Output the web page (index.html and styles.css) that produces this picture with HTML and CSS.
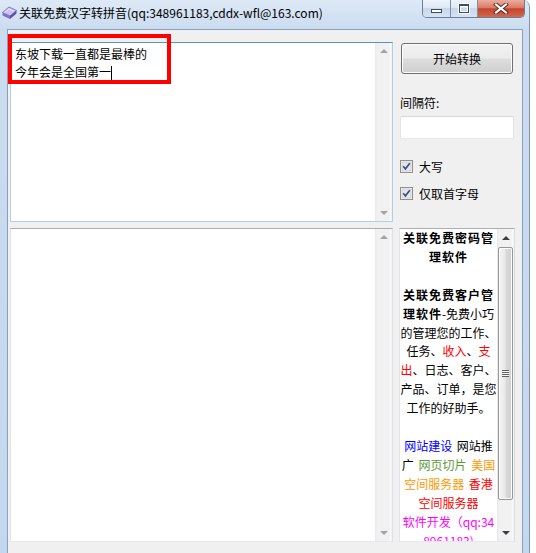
FILE: index.html
```html
<!DOCTYPE html>
<html lang="zh">
<head>
<meta charset="utf-8">
<title>关联免费汉字转拼音</title>
<link rel="stylesheet" href="styles.css">
</head>
<body>
<div class="window">
  <div class="titlebar">
    <svg class="app-icon" width="15" height="15" viewBox="0 0 15 15">
      <polygon points="0.5,7.5 7,2 14.5,5.5 8,11" fill="#c9c2f2" stroke="#6d62b8" stroke-width="0.8"/>
      <polygon points="0.5,7.5 8,11 8,14 0.5,10.5" fill="#7e73c8"/>
      <polygon points="8,11 14.5,5.5 14.5,8.5 8,14" fill="#5a4fa6"/>
      <polyline points="2.5,7.6 7,4 12,6.2" fill="none" stroke="#ffffff" stroke-width="0.8" opacity="0.8"/>
    </svg>
    <span class="title">关联免费汉字转拼音(qq:348961183,cddx-wfl@163.com)</span>
    <div class="caption">
      <div class="cbtn cbtn-min"><span class="min-glyph"></span></div>
      <div class="cbtn cbtn-max"><span class="max-glyph"></span></div>
      <div class="cbtn cbtn-close">
        <svg width="16" height="11" viewBox="0 0 16 11">
          <path d="M3,1.5 L13,9.5 M13,1.5 L3,9.5" stroke="#4a2a24" stroke-width="4" stroke-linecap="square"/>
          <path d="M3,1.5 L13,9.5 M13,1.5 L3,9.5" stroke="#ffffff" stroke-width="2.2" stroke-linecap="square"/>
        </svg>
      </div>
    </div>
  </div>

  <div class="client">
    <div class="memo memo-focus">
      <div class="memo-text">东坡下载一直都是最棒的<br>今年会是全国第一<span class="caret"></span></div>
      <div class="vscroll">
        <span class="arrow arrow-up"></span>
        <span class="arrow arrow-down"></span>
      </div>
    </div>

    <div class="controls">
      <div class="btn">开始转换</div>
      <div class="field-label">间隔符:</div>
      <div class="textbox"></div>
      <div class="check-row check-first">
        <svg class="checkbox" width="13" height="13" viewBox="0 0 13 13">
          <rect x="0.5" y="0.5" width="12" height="12" fill="#f4f4f4" stroke="#8e8f8f"/>
          <rect x="2" y="2" width="9" height="9" fill="#e6e6e6" stroke="#c2c4c6" stroke-width="0.6"/>
          <path d="M3.2,6.3 L5.4,8.8 L9.8,3.2" fill="none" stroke="#3c4f8c" stroke-width="1.7"/>
        </svg>
        <span>大写</span>
      </div>
      <div class="check-row check-second">
        <svg class="checkbox" width="13" height="13" viewBox="0 0 13 13">
          <rect x="0.5" y="0.5" width="12" height="12" fill="#f4f4f4" stroke="#8e8f8f"/>
          <rect x="2" y="2" width="9" height="9" fill="#e6e6e6" stroke="#c2c4c6" stroke-width="0.6"/>
          <path d="M3.2,6.3 L5.4,8.8 L9.8,3.2" fill="none" stroke="#3c4f8c" stroke-width="1.7"/>
        </svg>
        <span>仅取首字母</span>
      </div>
    </div>

    <div class="memo memo-plain">
      <div class="memo-text"></div>
      <div class="vscroll">
        <span class="arrow arrow-up"></span>
        <span class="arrow arrow-down"></span>
      </div>
    </div>

    <div class="richbox">
      <div class="rich-text">
        <div class="line"><b>关联免费密码管</b></div>
        <div class="line"><b>理软件</b></div>
        <div class="line">&nbsp;</div>
        <div class="line"><b>关联免费客户管</b></div>
        <div class="line"><b>理软件</b>-免费小巧</div>
        <div class="line">的管理您的工作、</div>
        <div class="line">任务、<span class="c-red">收入</span>、<span class="c-red">支</span></div>
        <div class="line"><span class="c-red">出</span>、日志、客户、</div>
        <div class="line">产品、订单，是您</div>
        <div class="line">工作的好助手。</div>
        <div class="line">&nbsp;</div>
        <div class="line"><span class="c-blue">网站建设</span> 网站推</div>
        <div class="line">广 <span class="c-green">网页切片</span> <span class="c-orange">美国</span></div>
        <div class="line"><span class="c-orange">空间服务器</span> <span class="c-red">香港</span></div>
        <div class="line"><span class="c-red">空间服务器</span></div>
        <div class="line c-magenta">软件开发（qq:34</div>
        <div class="line c-magenta">8961183)</div>
      </div>
      <div class="vscroll vscroll-active">
        <span class="sbtn"><span class="arrow arrow-up"></span></span>
        <span class="thumb"><span class="grip"></span></span>
        <span class="track"></span>
        <span class="sbtn"><span class="arrow arrow-down"></span></span>
      </div>
    </div>
  </div>

  <div class="annotation"></div>
</div>
</body>
</html>
```

FILE: styles.css
```css
* { box-sizing: border-box; }

html, body {
  margin: 0;
  padding: 0;
}

body {
  width: 536px;
  height: 553px;
  overflow: hidden;
  background: #ffffff;
  font-family: "Noto Sans CJK SC", "Noto Sans", sans-serif;
  font-size: 12px;
  color: #000;
}

.window {
  position: relative;
  width: 530px;
  height: 553px;
  padding: 0 6px 0 7px;
  background: linear-gradient(180deg, #dde9f6 0px, #cbdcf0 29px, #c3d7ee 100%);
  border-right: 1px solid #8196b0;
  border-top-right-radius: 7px;
}

/* ---------- title bar ---------- */
.titlebar {
  height: 29px;
  margin: 0 -6px 0 -7px;
  display: flex;
  align-items: flex-start;
}

.app-icon {
  margin: 5px 2px 0 2px;
  flex: none;
}

.title {
  margin-top: 5px;
  line-height: 16px;
  font-size: 12px;
  white-space: nowrap;
  color: #000;
}

.caption {
  margin-left: auto;
  margin-right: 4px;
  display: flex;
  height: 18px;
  border: 1px solid #6b7e96;
  border-top: none;
  border-radius: 0 0 5px 5px;
  overflow: hidden;
}

.cbtn {
  display: flex;
  align-items: center;
  justify-content: center;
  height: 100%;
}

.cbtn-min,
.cbtn-max {
  width: 27px;
  background: linear-gradient(180deg, #edf3fa 0%, #dfe8f4 45%, #c8d7ea 50%, #d6e3f2 100%);
}

.cbtn-max,
.cbtn-close {
  border-left: 1px solid #7d8fa6;
}

.cbtn-close {
  width: 47px;
  background: linear-gradient(180deg, #eaada0 0%, #da7c66 45%, #c5432d 52%, #d2684f 100%);
}

.min-glyph {
  display: block;
  width: 11px;
  height: 4px;
  margin-top: 5px;
  background: #ffffff;
  border: 1px solid #3c4d63;
}

.max-glyph {
  display: block;
  width: 10px;
  height: 9px;
  border: 1px solid #3c4d63;
  border-top-width: 2px;
  background: transparent;
  box-shadow: 0 0 0 1px rgba(255, 255, 255, 0.85), inset 0 0 0 1px rgba(255, 255, 255, 0.85);
}

/* ---------- client ---------- */
.client {
  height: 524px;
  background: #f0f0f0;
  border: 1px solid #8aa0bc;
  border-bottom: none;
  padding: 12px 0 0 2px;
  display: grid;
  grid-template-columns: 383px 116px;
  grid-template-rows: 180px 314px;
  column-gap: 6px;
  row-gap: 6px;
  align-content: start;
}

.memo {
  display: flex;
  background: #ffffff;
  border: 1px solid;
  overflow: hidden;
}

.memo-focus {
  border-color: #5c93bd #b4cde6 #b4cde6 #b4cde6;
}

.memo-plain {
  border-color: #abadb3 #dbdfe6 #e3e9ef #e2e3ea;
}

.memo-text {
  flex: 1;
  padding: 2px 4px;
  line-height: 18px;
  white-space: nowrap;
}

.caret {
  display: inline-block;
  width: 1px;
  height: 14px;
  background: #000;
  vertical-align: -3px;
}

/* ---------- scrollbars ---------- */
.vscroll {
  width: 17px;
  flex: none;
  display: flex;
  flex-direction: column;
  justify-content: space-between;
  align-items: center;
  padding: 6px 0;
  background: linear-gradient(90deg, #e7e7e7 0px, #f1f1f1 2px, #f1f1f1 14px, #fbfbfb 16px, #eaeaea 17px);
}

.arrow {
  display: block;
  width: 0;
  height: 0;
  border-left: 4px solid transparent;
  border-right: 4px solid transparent;
}

.arrow-up {
  border-bottom: 4px solid #a3a3a3;
}

.arrow-down {
  border-top: 4px solid #a3a3a3;
}

.vscroll-active {
  padding: 0;
  justify-content: flex-start;
  align-items: stretch;
}

.vscroll-active .arrow-up { border-bottom-color: #3d3d3d; }
.vscroll-active .arrow-down { border-top-color: #3d3d3d; }

.sbtn {
  height: 17px;
  flex: none;
  display: flex;
  align-items: center;
  justify-content: center;
}

.thumb {
  height: 253px;
  margin: 1px 1px 0 1px;
  flex: none;
  border: 1px solid #979797;
  border-radius: 2px;
  background: linear-gradient(90deg, #f4f4f4 0%, #e9e9e9 45%, #d9d9d9 55%, #d0d0d0 100%);
  box-shadow: inset 0 0 0 1px #fbfbfb;
  display: flex;
  align-items: center;
  justify-content: center;
}

.grip {
  display: block;
  width: 7px;
  height: 7px;
  background: repeating-linear-gradient(180deg, #5f5f5f 0px, #5f5f5f 1px, #f8f8f8 1px, #f8f8f8 2px);
}

.track {
  flex: 1;
}

/* ---------- right controls ---------- */
.controls {
  display: flex;
  flex-direction: column;
  align-items: flex-start;
}

.btn {
  margin: 1px 0 0 2px;
  width: 112px;
  height: 31px;
  border: 1px solid #707070;
  border-radius: 3px;
  background: linear-gradient(180deg, #f2f2f2 0%, #ebebeb 48%, #dddddd 52%, #cfcfcf 100%);
  box-shadow: inset 0 0 0 1px #fcfcfc;
  display: flex;
  align-items: center;
  justify-content: center;
  line-height: 14px;
}

.field-label {
  margin: 22px 0 0 1px;
  line-height: 14px;
}

.textbox {
  margin: 6px 0 0 1px;
  width: 114px;
  height: 23px;
  background: #ffffff;
  border: 1px solid;
  border-color: #d5d7db #e2e3e6 #e6e8eb #e2e3e6;
  border-radius: 2px;
}

.check-row {
  display: flex;
  align-items: center;
  gap: 6px;
  height: 13px;
  margin-left: 1px;
  line-height: 14px;
}

.check-first { margin-top: 21px; }
.check-second { margin-top: 14px; }

.checkbox { flex: none; }

/* ---------- rich box ---------- */
.richbox {
  display: flex;
  background: #ffffff;
  border: 1px solid;
  border-color: #abadb3 #dbdfe6 #e3e9ef #e2e3ea;
  overflow: hidden;
}

.rich-text {
  flex: 1;
  overflow: hidden;
  text-align: center;
  line-height: 18.9px;
  white-space: nowrap;
  word-spacing: 2px;
}

.rich-text b {
  font-weight: 700;
  letter-spacing: 1px;
}

.c-red { color: #ff0000; }
.c-blue { color: #0000ff; }
.c-green { color: #5c9a3a; }
.c-orange { color: #ff9900; }
.c-magenta { color: #ff00ff; }

/* ---------- annotation overlay ---------- */
.annotation {
  position: absolute;
  left: 8px;
  top: 34px;
  width: 163px;
  height: 50px;
  border: 4px solid #ff0000;
  pointer-events: none;
}
```
